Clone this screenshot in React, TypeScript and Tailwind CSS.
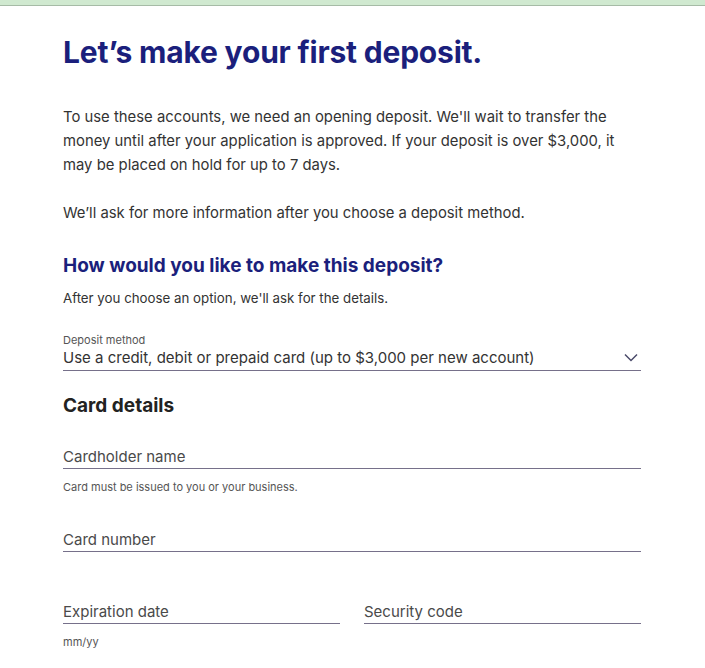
import React from "react";

const font = { fontFamily: "Inter, Lato, sans-serif" };

function Field({ label, hint, className = "" }: { label: string; hint?: string; className?: string }) {
  return (
    <div className={className}>
      <div className="h-[23px] pt-[1px] border-b border-[#76708a] text-[15px] leading-[20px] text-[#4a4a4a]">{label}</div>
      {hint && <div className="mt-[11px] text-[11px] leading-[14px] text-[#555]">{hint}</div>}
    </div>
  );
}

export default function App() {
  return (
    <div className="min-h-[668px] bg-white" style={font}>
      <div className="h-[5px] bg-[#d0e9d0]" />
      <div className="h-[1px] bg-[#a6bba6]" />
      <div className="pl-[63px] w-[641px]">
        <h1 className="mt-[26px] text-[30px] leading-[40px] font-bold tracking-[-0.2px] text-[#1b1f7c]">Let’s make your first deposit.</h1>
        <div className="mt-[33px] text-[14.85px] leading-[24px] text-[#333]">
          <p>To use these accounts, we need an opening deposit. We'll wait to transfer the money until after your application is approved. If your deposit is over $3,000, it may be placed on hold for up to 7 days.</p>
          <p className="mt-[24px]">We’ll ask for more information after you choose a deposit method.</p>
        </div>
        <h2 className="mt-[27px] text-[19px] leading-[28px] font-bold text-[#1b1f7c]">How would you like to make this deposit?</h2>
        <p className="mt-[9px] text-[13.3px] leading-[18px] text-[#333]">After you choose an option, we'll ask for the details.</p>
        <div className="mt-[26px]">
          <div className="text-[11px] leading-[14px] text-[#555]">Deposit method</div>
          <div className="flex items-start justify-between border-b border-[#76708a] h-[24px]">
            <span className="text-[15px] leading-[22px] text-[#333]">Use a credit, debit or prepaid card (up to $3,000 per new account)</span>
            <svg width="14" height="9" viewBox="0 0 14 9" className="mr-[3px] mt-[6px]">
              <path d="M1 1.5 L7 7.5 L13 1.5" fill="none" stroke="#4a4a6a" strokeWidth="1.5" />
            </svg>
          </div>
        </div>
        <h3 className="mt-[22px] text-[19px] leading-[26px] font-bold text-[#222]">Card details</h3>
        <Field className="mt-[27px]" label="Cardholder name" hint="Card must be issued to you or your business." />
        <Field className="mt-[35px]" label="Card number" />
        <div className="mt-[49px] grid grid-cols-2 gap-[24px]">
          <Field label="Expiration date" hint="mm/yy" />
          <Field label="Security code" />
        </div>
      </div>
    </div>
  );
}
